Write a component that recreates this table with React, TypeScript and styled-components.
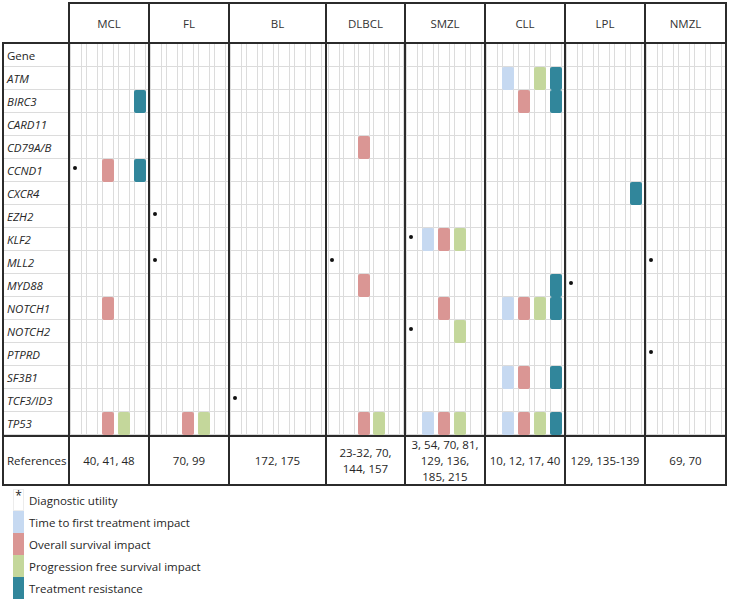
import styled, { createGlobalStyle } from 'styled-components'

type Mark = 'ttf' | 'os' | 'pfs' | 'tr'

const markColors: Record<Mark, string> = {
  ttf: '#c6d9f1',
  os: '#da9694',
  pfs: '#c4d79b',
  tr: '#31869b',
}

const slotOrder: Mark[] = ['ttf', 'os', 'pfs', 'tr']

const columns = [
  { name: 'MCL', width: 80, pitch: 16, refs: ['40, 41, 48'] },
  { name: 'FL', width: 80, pitch: 16, refs: ['70, 99'] },
  { name: 'BL', width: 97, pitch: 16, refs: ['172, 175'] },
  { name: 'DLBCL', width: 79, pitch: 15, refs: ['23-32, 70,', '144, 157'] },
  { name: 'SMZL', width: 80, pitch: 16, refs: ['3, 54, 70, 81,', '129, 136,', '185, 215'] },
  { name: 'CLL', width: 80, pitch: 16, refs: ['10, 12, 17, 40'] },
  { name: 'LPL', width: 80, pitch: 16, refs: ['129, 135-139'] },
  { name: 'NMZL', width: 81, pitch: 16, refs: ['69, 70'] },
]

const genes = [
  'ATM', 'BIRC3', 'CARD11', 'CD79A/B', 'CCND1', 'CXCR4', 'EZH2', 'KLF2',
  'MLL2', 'MYD88', 'NOTCH1', 'NOTCH2', 'PTPRD', 'SF3B1', 'TCF3/ID3', 'TP53',
]

type Entry = { dot?: boolean; marks?: Mark[] }

// column -> gene -> entry
const data: Record<string, Record<string, Entry>> = {
  MCL: {
    BIRC3: { marks: ['tr'] },
    CCND1: { dot: true, marks: ['os', 'tr'] },
    NOTCH1: { marks: ['os'] },
    TP53: { marks: ['os', 'pfs'] },
  },
  FL: {
    EZH2: { dot: true },
    MLL2: { dot: true },
    TP53: { marks: ['os', 'pfs'] },
  },
  BL: {
    'TCF3/ID3': { dot: true },
  },
  DLBCL: {
    'CD79A/B': { marks: ['os'] },
    MLL2: { dot: true },
    MYD88: { marks: ['os'] },
    TP53: { marks: ['os', 'pfs'] },
  },
  SMZL: {
    KLF2: { dot: true, marks: ['ttf', 'os', 'pfs'] },
    NOTCH1: { marks: ['os'] },
    NOTCH2: { dot: true, marks: ['pfs'] },
    TP53: { marks: ['ttf', 'os', 'pfs'] },
  },
  CLL: {
    ATM: { marks: ['ttf', 'pfs', 'tr'] },
    BIRC3: { marks: ['os', 'tr'] },
    MYD88: { marks: ['tr'] },
    NOTCH1: { marks: ['ttf', 'os', 'pfs', 'tr'] },
    SF3B1: { marks: ['ttf', 'os', 'tr'] },
    TP53: { marks: ['ttf', 'os', 'pfs', 'tr'] },
  },
  LPL: {
    CXCR4: { marks: ['tr'] },
    MYD88: { dot: true },
  },
  NMZL: {
    MLL2: { dot: true },
    PTPRD: { dot: true },
  },
}

const legend = [
  { mark: null, label: 'Diagnostic utility' },
  { mark: 'ttf' as Mark, label: 'Time to first treatment impact' },
  { mark: 'os' as Mark, label: 'Overall survival impact' },
  { mark: 'pfs' as Mark, label: 'Progression free survival impact' },
  { mark: 'tr' as Mark, label: 'Treatment resistance' },
]

const GlobalStyle = createGlobalStyle`
  body {
    margin: 0;
    background: #fff;
    font-family: "Open Sans", "Liberation Sans", sans-serif;
    color: #262626;
  }
`

const Page = styled.div`
  padding: 2px 0 0 2px;
  width: 729px;
  height: 609px;
  box-sizing: border-box;
  overflow: hidden;
`

const Table = styled.div<{ $cols: string }>`
  display: grid;
  grid-template-columns: ${({ $cols }) => $cols};
  grid-template-rows: 42px repeat(17, 23px) 51px;
  font-size: 11.5px;
`

const line = '#2b2b2b'
const grid = '#dcdcdc'

const Corner = styled.div`
  border-right: 2px solid ${line};
  border-bottom: 2px solid ${line};
`

const HeadCell = styled.div`
  border-top: 2px solid ${line};
  border-right: 2px solid ${line};
  border-bottom: 2px solid ${line};
  display: flex;
  align-items: center;
  justify-content: center;
  color: #333;
`

const LabelCell = styled.div<{ $italic?: boolean }>`
  border-left: 2px solid ${line};
  border-right: 2px solid ${line};
  display: flex;
  align-items: center;
  padding-left: 3px;
  font-style: ${({ $italic }) => ($italic ? 'italic' : 'normal')};
  background-image: linear-gradient(to top, ${grid} 0 1px, transparent 1px);
`

const DataCell = styled.div<{ $pitch: number }>`
  border-right: 2px solid ${line};
  display: grid;
  grid-template-columns: ${({ $pitch }) => `${28 - $pitch}px repeat(4, 12px)`};
  column-gap: ${({ $pitch }) => $pitch - 12}px;
  background-image:
    linear-gradient(to top, ${grid} 0 1px, transparent 1px),
    repeating-linear-gradient(
      to right,
      ${grid} 0 1.5px,
      transparent 1.5px 11px,
      ${grid} 11px 12.5px,
      transparent 12.5px ${({ $pitch }) => $pitch}px
    );
  background-position: 0 0, ${({ $pitch }) => 16 % $pitch}px 0;
`

const DotSlot = styled.div``

const Dot = styled.span`
  display: block;
  width: 4px;
  height: 4px;
  margin: 7px 0 0 3px;
  border-radius: 50%;
  background: #111;
`

const Block = styled.div<{ $mark?: Mark }>`
  background: ${({ $mark }) => ($mark ? markColors[$mark] : 'transparent')};
  border-radius: 2px;
`

const RefLabel = styled.div`
  border: 2px solid ${line};
  display: flex;
  align-items: center;
  padding-left: 3px;
`

const RefCell = styled.div`
  border-top: 2px solid ${line};
  border-right: 2px solid ${line};
  border-bottom: 2px solid ${line};
  display: flex;
  flex-direction: column;
  align-items: center;
  justify-content: center;
  line-height: 16px;
  white-space: nowrap;
`

const Legend = styled.div`
  display: flex;
  flex-direction: column;
  margin: 3px 0 0 11px;
  font-size: 11.5px;
`

const LegendItem = styled.div`
  display: flex;
  align-items: center;
  gap: 5px;
  height: 22px;
`

const Swatch = styled.div<{ $mark: Mark | null }>`
  width: 11px;
  align-self: stretch;
  box-sizing: border-box;
  background: ${({ $mark }) => ($mark ? markColors[$mark] : '#fff')};
  border: ${({ $mark }) => ($mark ? 'none' : '1px solid #ececec')};
  font-size: 12px;
  line-height: 12px;
  text-align: center;
  color: #222;
`

export default function App() {
  const cols = ['68px', ...columns.map((c) => `${c.width}px`)].join(' ')

  return (
    <Page>
      <GlobalStyle />
      <Table $cols={cols}>
        <Corner />
        {columns.map((c) => (
          <HeadCell key={c.name}>{c.name}</HeadCell>
        ))}

        <LabelCell>Gene</LabelCell>
        {columns.map((c) => (
          <DataCell key={c.name} $pitch={c.pitch}>
            <DotSlot />
          </DataCell>
        ))}

        {genes.map((g) => [
          <LabelCell key={g} $italic>
            {g}
          </LabelCell>,
          ...columns.map((c) => {
            const entry = data[c.name][g] || {}
            return (
              <DataCell key={`${g}-${c.name}`} $pitch={c.pitch}>
                <DotSlot>{entry.dot && <Dot />}</DotSlot>
                {slotOrder.map((m) => (
                  <Block
                    key={m}
                    $mark={entry.marks?.includes(m) ? m : undefined}
                  />
                ))}
              </DataCell>
            )
          }),
        ])}

        <RefLabel>References</RefLabel>
        {columns.map((c) => (
          <RefCell key={c.name}>
            {c.refs.map((r) => (
              <span key={r}>{r}</span>
            ))}
          </RefCell>
        ))}
      </Table>

      <Legend>
        {legend.map((l) => (
          <LegendItem key={l.label}>
            <Swatch $mark={l.mark}>{l.mark ? '' : '*'}</Swatch>
            {l.label}
          </LegendItem>
        ))}
      </Legend>
    </Page>
  )
}
